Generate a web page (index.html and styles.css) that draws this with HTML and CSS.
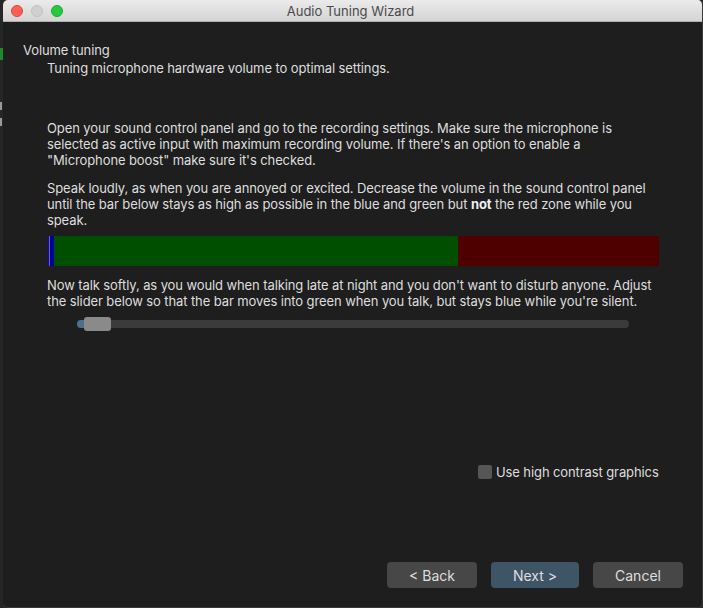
FILE: index.html
```html
<!DOCTYPE html>
<html>
<head>
<meta charset="utf-8">
<link rel="stylesheet" href="styles.css">
</head>
<body>
<div class="desk">
  <div class="behind">
    <span class="g"></span>
    <span class="mark"></span>
    <span class="mark"></span>
  </div>
  <div class="window">
    <div class="titlebar">
      <div class="lights">
        <span class="light red"></span>
        <span class="light gray"></span>
        <span class="light green"></span>
      </div>
      <div class="title">Audio Tuning Wizard</div>
    </div>
    <div class="content">
      <div class="heading">Volume tuning</div>
      <div class="sub">Tuning microphone hardware volume to optimal settings.</div>
      <div class="body">
        <p class="p1">Open your sound control panel and go to the recording settings. Make sure the microphone is selected as active input with maximum recording volume. If there's an option to enable a "Microphone boost" make sure it's checked.</p>
        <p class="p2">Speak loudly, as when you are annoyed or excited. Decrease the volume in the sound control panel until the bar below stays as high as possible in the blue and green but <b>not</b> the red zone while you speak.</p>
        <div class="meter">
          <div class="m-blue"></div>
          <div class="m-green"></div>
          <div class="m-red"></div>
        </div>
        <p class="p3">Now talk softly, as you would when talking late at night and you don't want to disturb anyone. Adjust the slider below so that the bar moves into green when you talk, but stays blue while you're silent.</p>
        <div class="slider">
          <div class="track"><div class="fill"></div></div>
          <div class="handle"></div>
        </div>
      </div>
      <div class="check-row">
        <span class="box"></span>
        <span class="check-label">Use high contrast graphics</span>
      </div>
      <div class="buttons">
        <button class="btn">&lt; Back</button>
        <button class="btn primary">Next &gt;</button>
        <button class="btn">Cancel</button>
      </div>
    </div>
  </div>
</div>
</body>
</html>
```
FILE: styles.css
```css
html, body {
  margin: 0;
  padding: 0;
  width: 703px;
  height: 608px;
  overflow: hidden;
  background: #2a2a2a;
  font-family: "Inter", "Liberation Sans", sans-serif;
}
.desk {
  display: flex;
  width: 703px;
  height: 608px;
}
.behind {
  width: 3px;
  flex: none;
  background: #262626;
  display: flex;
  flex-direction: column;
  padding-top: 48px;
  overflow: hidden;
}
.behind .g {
  display: block;
  width: 3px;
  height: 12px;
  background: #1f8a2a;
  margin-bottom: 42px;
}
.behind .mark {
  display: block;
  width: 2px;
  height: 8px;
  background: #9a9a9a;
  margin-bottom: 8px;
}
.window {
  flex: 1;
  display: flex;
  flex-direction: column;
  background: #1e1e1e;
  border-radius: 5px;
  border-right: 1px solid #3a3a3a;
  border-bottom: 1px solid #3a3a3a;
  overflow: hidden;
  height: 607px;
}
.titlebar {
  height: 21px;
  flex: none;
  position: relative;
  background: linear-gradient(#ebebeb, #d4d4d4);
  border-bottom: 1px solid #b0b0b0;
  display: flex;
  align-items: center;
  justify-content: center;
}
.lights {
  position: absolute;
  left: 8px;
  top: 5px;
  display: flex;
  gap: 8px;
}
.light {
  width: 12px;
  height: 12px;
  border-radius: 50%;
  box-sizing: border-box;
}
.red { background: #fe5f57; border: 1px solid #e0443e; }
.gray { background: #d0d0d0; border: 1px solid #c0c0c0; }
.green { background: #28c840; border: 1px solid #1aab29; }
.title {
  font-size: 13px;
  color: #4a4a4a;
  margin-left: -4px;
}
.content {
  flex: 1;
  display: flex;
  flex-direction: column;
  padding: 20px 0 0 20px;
  color: #dedede;
  font-size: 13px;
  line-height: 16px;
  letter-spacing: -0.1px;
}
.sub {
  margin-top: 2px;
  margin-left: 24px;
}
.body {
  margin-left: 24px;
  margin-top: 44px;
  width: 612px;
}
.body p {
  margin: 0;
}
.body .p2 { margin-top: 12px; }
.body .p3 { margin-top: 11px; }
.body b { font-weight: 700; color: #f0f0f0; }
.meter {
  display: flex;
  height: 30px;
  margin-top: 8px;
}
.m-blue {
  width: 5px;
  background: #00009a;
  border-left: 2px solid #1a1a4a;
  box-shadow: inset 1px 0 0 #5a5aff;
}
.m-green {
  width: 404px;
  background: #004f00;
}
.m-red {
  flex: 1;
  background: #4e0000;
}
.slider {
  position: relative;
  margin-top: 8px;
  margin-left: 30px;
  width: 552px;
  height: 14px;
  display: flex;
  align-items: center;
}
.track {
  width: 100%;
  height: 8px;
  border-radius: 4px;
  background: #3b3b3b;
  overflow: hidden;
}
.fill {
  width: 10px;
  height: 100%;
  background: #4b6f8e;
}
.handle {
  position: absolute;
  left: 7px;
  top: 0;
  width: 27px;
  height: 14px;
  border-radius: 3px;
  background: #8a8a8a;
}
.check-row {
  display: flex;
  align-items: center;
  margin-top: 133px;
  margin-left: 455px;
  gap: 4px;
}
.box {
  width: 14px;
  height: 14px;
  background: #565656;
  border-radius: 2px;
}
.check-label {
  font-size: 13px;
  color: #dedede;
}
.buttons {
  display: flex;
  margin-top: 82px;
  margin-left: 364px;
  gap: 14px;
}
.btn {
  height: 26px;
  border: none;
  border-radius: 4px;
  background: #474747;
  color: #dedede;
  font-family: "Inter", "Liberation Sans", sans-serif;
  font-size: 14px;
  padding: 0;
  width: 90px;
}
.btn.primary {
  width: 88px;
  background: #3e5566;
}
```
